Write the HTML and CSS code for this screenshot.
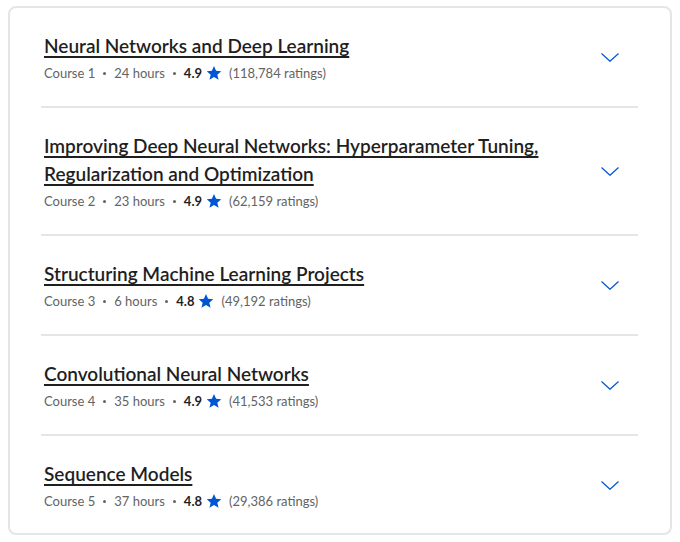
FILE: index.html
```html
<!DOCTYPE html>
<html>
<head>
<meta charset="utf-8">
<link rel="stylesheet" href="styles.css">
</head>
<body>
<div class="card">
  <div class="row">
    <div class="info">
      <a class="title" href="#">Neural Networks and Deep Learning</a>
      <div class="meta"><span>Course 1</span><span class="dot"></span><span>24 hours</span><span class="dot"></span><b>4.9</b><svg class="star" viewBox="0 0 24 24"><path d="M12 1.5l3.1 7.2 7.8.7-5.9 5.1 1.8 7.7L12 18.1l-6.8 4.1 1.8-7.7-5.9-5.1 7.8-.7z"/></svg><span class="count">(118,784 ratings)</span></div>
    </div>
    <svg class="chev" viewBox="0 0 18 9"><path d="M.5.5L9 8.3 17.5.5"/></svg>
  </div>
  <div class="row">
    <div class="info">
      <a class="title" href="#">Improving Deep Neural Networks: Hyperparameter Tuning, Regularization and Optimization</a>
      <div class="meta"><span>Course 2</span><span class="dot"></span><span>23 hours</span><span class="dot"></span><b>4.9</b><svg class="star" viewBox="0 0 24 24"><path d="M12 1.5l3.1 7.2 7.8.7-5.9 5.1 1.8 7.7L12 18.1l-6.8 4.1 1.8-7.7-5.9-5.1 7.8-.7z"/></svg><span class="count">(62,159 ratings)</span></div>
    </div>
    <svg class="chev" viewBox="0 0 18 9"><path d="M.5.5L9 8.3 17.5.5"/></svg>
  </div>
  <div class="row">
    <div class="info">
      <a class="title" href="#">Structuring Machine Learning Projects</a>
      <div class="meta"><span>Course 3</span><span class="dot"></span><span>6 hours</span><span class="dot"></span><b>4.8</b><svg class="star" viewBox="0 0 24 24"><path d="M12 1.5l3.1 7.2 7.8.7-5.9 5.1 1.8 7.7L12 18.1l-6.8 4.1 1.8-7.7-5.9-5.1 7.8-.7z"/></svg><span class="count">(49,192 ratings)</span></div>
    </div>
    <svg class="chev" viewBox="0 0 18 9"><path d="M.5.5L9 8.3 17.5.5"/></svg>
  </div>
  <div class="row">
    <div class="info">
      <a class="title" href="#">Convolutional Neural Networks</a>
      <div class="meta"><span>Course 4</span><span class="dot"></span><span>35 hours</span><span class="dot"></span><b>4.9</b><svg class="star" viewBox="0 0 24 24"><path d="M12 1.5l3.1 7.2 7.8.7-5.9 5.1 1.8 7.7L12 18.1l-6.8 4.1 1.8-7.7-5.9-5.1 7.8-.7z"/></svg><span class="count">(41,533 ratings)</span></div>
    </div>
    <svg class="chev" viewBox="0 0 18 9"><path d="M.5.5L9 8.3 17.5.5"/></svg>
  </div>
  <div class="row">
    <div class="info">
      <a class="title" href="#">Sequence Models</a>
      <div class="meta"><span>Course 5</span><span class="dot"></span><span>37 hours</span><span class="dot"></span><b>4.8</b><svg class="star" viewBox="0 0 24 24"><path d="M12 1.5l3.1 7.2 7.8.7-5.9 5.1 1.8 7.7L12 18.1l-6.8 4.1 1.8-7.7-5.9-5.1 7.8-.7z"/></svg><span class="count">(29,386 ratings)</span></div>
    </div>
    <svg class="chev" viewBox="0 0 18 9"><path d="M.5.5L9 8.3 17.5.5"/></svg>
  </div>
</div>
</body>
</html>
```
FILE: styles.css
```css
html, body { margin: 0; padding: 0; background: #fff; }
body { padding: 6px 8px; font-family: "Source Sans Pro", Lato, "Liberation Sans", sans-serif; }
.card {
  border: 2px solid #e5e5e5;
  border-radius: 8px;
  padding: 0 32px 0 31px;
  height: 529px;
  box-sizing: border-box;
  overflow: hidden;
}
.row {
  display: flex;
  align-items: center;
  padding: 24px 0 23px 3px;
  border-bottom: 2px solid #e5e5e5;
}
.row:last-child { border-bottom: none; }
.info { flex: 1; }
.title {
  display: block;
  font-size: 19px;
  line-height: 28px;
  font-weight: 600;
  color: #1f1f1f;
  text-decoration: underline;
  text-decoration-thickness: 2px;
  text-underline-offset: 3px;
  max-width: 512px;
}
.meta {
  display: flex;
  align-items: center;
  margin-top: 3px;
  font-size: 13px;
  line-height: 20px;
  color: #636363;
}
.dot {
  width: 3px; height: 3px; border-radius: 50%;
  background: #636363;
  margin: 1px 8px 0;
}
.meta b { color: #1f1f1f; font-weight: 700; }
.star { width: 16px; height: 16px; fill: #0056d2; margin: 0 7px 0 4px; }
.chev {
  width: 18px; height: 9px;
  fill: none; stroke: #0056d2; stroke-width: 1.2;
  margin-right: 19px;
}
```
